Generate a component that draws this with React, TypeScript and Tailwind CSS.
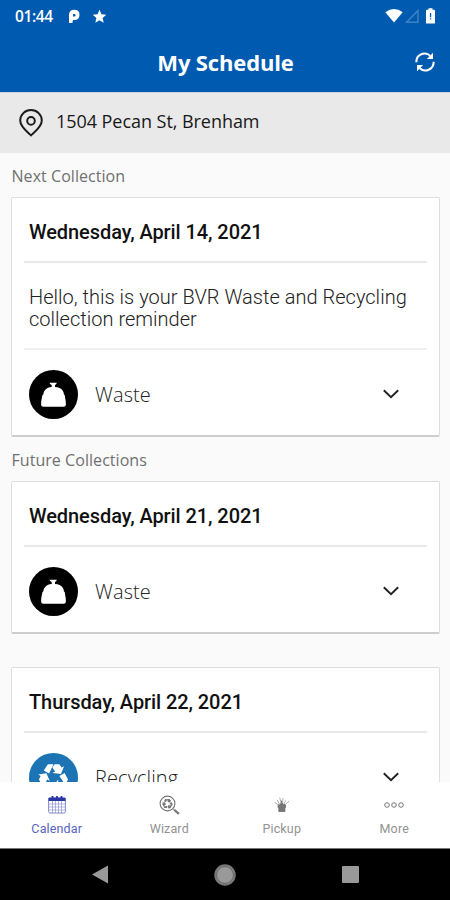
import type { ReactNode } from "react";
import clsx from "clsx";

type CollectionCardProps = {
  date: string;
  message?: string;
  children: ReactNode;
};

type CollectionRowProps = {
  icon: ReactNode;
  label: string;
};

type TabProps = {
  icon: ReactNode;
  label: string;
  active?: boolean;
};

const StatusBar = () => {
  return (
    <div className="flex h-8 items-center pl-[15px] pr-[15px] text-white">
      <span className="w-10 whitespace-nowrap font-['Open_Sans'] text-[15.5px] font-semibold leading-8 tracking-[-0.4px]">
        01:44
      </span>
      <svg className="ml-[13px] h-[15px] w-3" viewBox="0 0 12 15">
        <path
          fillRule="evenodd"
          d="M1 14V5.500Q1.300.8 6.200.8q5.300 0 5.300 5.100T6.200 11H5l-.7 3zM5 5v2.500h1.300q1.300 0 1.300-1.300T6.300 4.900z"
          fill="currentColor"
        />
      </svg>
      <svg className="ml-3 h-[15px] w-[15px]" viewBox="0 0 15 15">
        <path
          d="M7.500.8l1.900 4.500 4.900.4-3.700 3.200 1.100 4.800-4.200-2.500-4.200 2.500 1.100-4.800L.7 5.700l4.900-.4z"
          fill="currentColor"
        />
      </svg>
      <div className="ml-auto flex items-center">
        <svg className="h-4 w-[18px]" viewBox="0 0 18 16">
          <path d="M.3 4.200Q9-2.400 17.700 4.200L9 14.600z" fill="currentColor" />
        </svg>
        <svg className="ml-[2px] h-4 w-[14px]" viewBox="0 0 14 16" fill="none">
          <path d="M1.500 14.200L13 2.500v11.700z" stroke="#3f82c4" strokeWidth="1.400" />
        </svg>
        <svg className="ml-[7px] h-4 w-[9px]" viewBox="0 0 9 16">
          <path
            d="M2.500.3h4v1.500h1.600q.9 0 .9.9v12q0 .9-.9.9H.9q-.9 0-.9-.9v-12q0-.9.9-.9h1.600z"
            fill="currentColor"
          />
          <path d="M3.900 5h1.300v4.200H3.900zM3.900 10.300h1.300v1.300H3.900z" fill="#005bb0" />
        </svg>
      </div>
    </div>
  );
};

const RefreshIcon = () => {
  return (
    <svg className="h-5 w-5" viewBox="0 0 20 20" fill="none" stroke="currentColor" strokeWidth="2">
      <path d="M1.400 10.200A8.200 8.200 0 0 1 15.400 4" />
      <path d="M18.600 9.800A8.200 8.200 0 0 1 4.600 16" />
      <path d="M18 .8v6.100h-6.100zM2 19.200v-6.100h6.100z" fill="currentColor" stroke="none" />
    </svg>
  );
};

const PinIcon = () => {
  return (
    <svg className="h-7 w-6" viewBox="0 0 24 28" fill="none" stroke="#1c1c1c" strokeWidth="2">
      <path d="M12 26.300C8.600 23 1.200 17.800 1.200 11.400a10.800 10.300 0 0 1 21.600 0C22.800 17.800 15.400 23 12 26.300z" />
      <circle cx="12" cy="11.900" r="3.800" />
    </svg>
  );
};

const WasteIcon = () => {
  return (
    <svg className="h-[49px] w-[49px]" viewBox="0 0 49 49">
      <circle cx="24.500" cy="24.500" r="24.500" fill="#000" />
      <path
        d="M20.500 12.700h7.200q.2 1.300-1.700 2.200v2.200q5.300.3 7.600 3.400 1.200 1.600 1.300 3.700 1.100.6 1.200 3.200.8 3.400.8 7.200 0 2-1.800 2.200H13.900q-1.800-.2-1.800-2.200 0-4 .9-7.300.1-2.500 1.400-3.100 0-2.200 1.300-3.800 2.400-3 7-3.300v-2.200q-2.200-.7-2.200-2.200z"
        fill="#fff"
      />
    </svg>
  );
};

// one bent arrow, repeated at 0, 120 and 240 degrees
const arrowPath =
  "M-9.700-7.200L-6-13q.3-.5 1-.5h5L-4.400-4.200zM1.200-13.500h4q.8 0 1.200.7L8-10.200l2.500-1.400L7.500-3.800-1-4.900l2.600-1.500-2.700-3.900z";

const RecycleArrows = () => {
  return (
    <g>
      <path d={arrowPath} />
      <path d={arrowPath} transform="rotate(120)" />
      <path d={arrowPath} transform="rotate(240)" />
    </g>
  );
};

const RecyclingIcon = () => {
  return (
    <svg className="h-[49px] w-[49px]" viewBox="0 0 49 49">
      <circle cx="24.500" cy="24.500" r="24.500" fill="#1c74b4" />
      <g transform="translate(24.500 24.800)" fill="#fff">
        <RecycleArrows />
      </g>
    </svg>
  );
};

const Chevron = () => {
  return (
    <svg className="h-[10px] w-4" viewBox="0 0 16 10" fill="none" stroke="#222" strokeWidth="1.900">
      <path d="M.8 1.200L8 8.200l7.200-7" />
    </svg>
  );
};

const CollectionRow = ({ icon, label }: CollectionRowProps) => {
  return (
    <div className="flex h-[85px] items-center pl-[5px] pr-7 pt-[3px]">
      {icon}
      <span className="ml-[17px] pt-px font-['Open_Sans'] text-[20px] font-light tracking-[0.1px] text-[#222]">
        {label}
      </span>
      <div className="ml-auto">
        <Chevron />
      </div>
    </div>
  );
};

const CollectionCard = ({ date, message, children }: CollectionCardProps) => {
  return (
    <section className="ml-[11px] mr-[10px] shrink-0 rounded-[2px] border border-b-2 border-[#dedede] border-b-[#cdcdcd] bg-white px-3">
      <h2 className="h-[65px] border-b-2 border-[#e9e9e9] pl-[5px] font-['Roboto'] text-[20px] font-medium leading-[68px] tracking-[-0.08px] text-[#111]">
        {date}
      </h2>
      {message ? (
        <p className="h-[87px] border-b-2 border-[#efefef] pl-[5px] pt-[23px] font-['Roboto'] text-[20px] font-light leading-[22px] tracking-[0.02px] text-[#222]">
          {message}
        </p>
      ) : null}
      {children}
    </section>
  );
};

const CalendarIcon = () => {
  return (
    <svg className="h-[19px] w-[18px]" viewBox="0 0 18 19" fill="none" stroke="#7f87c9">
      <rect x=".6" y="2.500" width="16.800" height="15.500" rx="1.500" strokeWidth="1" />
      <path d="M.6 3h16.800v3H.6z" fill="#2836a6" stroke="none" />
      <path d="M4.500 1v3M9 1v3M13.500 1v3" stroke="#2836a6" strokeWidth="1.800" />
      <path d="M1 9h16M1 12h16M1 15h16M4.500 6v12M7.500 6v12M10.500 6v12M13.500 6v12" strokeWidth=".6" />
    </svg>
  );
};

const WizardIcon = () => {
  return (
    <svg className="h-5 w-[21px]" viewBox="0 0 21 20" fill="none" stroke="#777">
      <circle cx="8.500" cy="8.500" r="7.400" strokeWidth="1.100" />
      <g transform="translate(8.500 8.800) scale(.36)" fill="#777" stroke="none">
        <RecycleArrows />
      </g>
      <path d="M13.800 13.500l1.600 1.500" strokeWidth="1" />
      <path d="M15.200 14.700l4.700 4.200" strokeWidth="2.200" />
    </svg>
  );
};

const PickupIcon = () => {
  return (
    <svg className="h-[17px] w-4" viewBox="0 0 16 17" fill="#777">
      <path d="M3.500 11q-.2-1.800 1.200-3l1.200.4L7.500 4l1.500 3.700 1.700.3q1.700 1.200 1.500 3l-1 1.500.3 2q0 1.500-1.400 1.500H5.600q-1.400 0-1.400-1.500l.3-2z" />
      <path
        d="M5.400 8L3.200 3.800M6.900 6L5.700 1.700M8.600 6.500l.4-4.500M10 8l1.700-3.600M11 9l4.200-4M4.500 9L1 6.600"
        stroke="#999"
        strokeWidth=".8"
      />
    </svg>
  );
};

const MoreIcon = () => {
  return (
    <svg className="h-[6px] w-5" viewBox="0 0 20 6" fill="none" stroke="#777">
      <circle cx="3" cy="3" r="2.300" />
      <circle cx="10" cy="3" r="2.300" />
      <circle cx="17" cy="3" r="2.300" />
    </svg>
  );
};

const Tab = ({ icon, label, active }: TabProps) => {
  return (
    <button className="flex flex-1 flex-col items-center pl-px pt-3">
      <span className="flex h-[21px] items-center justify-center">{icon}</span>
      <span
        className={clsx(
          "mt-[6px] font-['Roboto'] text-[12.5px] leading-4 tracking-[0.15px]",
          active ? "text-[#5562bd]" : "text-[#929292]"
        )}
      >
        {label}
      </span>
    </button>
  );
};

const SectionLabel = ({ children }: { children: ReactNode }) => {
  return (
    <p className="h-11 shrink-0 pl-[11.5px] font-['Open_Sans'] text-[16px] leading-[46px] tracking-[0.05px] text-[#707070]">
      {children}
    </p>
  );
};

const App = () => {
  return (
    <div className="flex h-[900px] w-[450px] flex-col overflow-hidden bg-[#fafafa]">
      <header className="h-[92px] shrink-0 bg-[#005bb0]">
        <StatusBar />
        <div className="grid h-[60px] grid-cols-[1fr_auto_1fr] items-center pr-[15px] text-white">
          <h1 className="col-start-2 pl-[16px] font-['Open_Sans'] text-[22px] font-bold leading-[60px] tracking-[-0.15px]">
            My Schedule
          </h1>
          <button className="justify-self-end">
            <RefreshIcon />
          </button>
        </div>
      </header>

      <div className="flex h-[61px] shrink-0 items-center border-t border-[#cfd5dd] bg-[#e9e9e9] pl-[19px]">
        <PinIcon />
        <span className="ml-[13px] pb-[3px] font-['Open_Sans'] text-[18px] tracking-[-0.05px] text-[#181818]">
          1504 Pecan St, Brenham
        </span>
      </div>

      <main className="flex min-h-0 flex-1 flex-col overflow-hidden">
        <SectionLabel>Next Collection</SectionLabel>
        <CollectionCard
          date="Wednesday, April 14, 2021"
          message="Hello, this is your BVR Waste and Recycling collection reminder"
        >
          <CollectionRow icon={<WasteIcon />} label="Waste" />
        </CollectionCard>
        <SectionLabel>Future Collections</SectionLabel>
        <CollectionCard date="Wednesday, April 21, 2021">
          <CollectionRow icon={<WasteIcon />} label="Waste" />
        </CollectionCard>
        <div className="h-[33px] shrink-0" />
        <CollectionCard date="Thursday, April 22, 2021">
          <CollectionRow icon={<RecyclingIcon />} label="Recycling" />
        </CollectionCard>
      </main>

      <nav className="flex h-[66px] shrink-0 bg-white">
        <Tab icon={<CalendarIcon />} label="Calendar" active />
        <Tab icon={<WizardIcon />} label="Wizard" />
        <Tab icon={<PickupIcon />} label="Pickup" />
        <Tab icon={<MoreIcon />} label="More" />
      </nav>

      <div className="grid h-[52px] shrink-0 grid-cols-3 items-center border-t border-[#777] bg-black px-[37px]">
        <svg className="h-[19px] w-4 justify-self-center" viewBox="0 0 16 19">
          <path d="M16 .5v18L0 9.500z" fill="#999" />
        </svg>
        <svg className="size-[22px] justify-self-center" viewBox="0 0 22 22">
          <circle cx="11" cy="11" r="10" fill="#999" stroke="#777" strokeWidth="1.500" />
          <circle cx="11" cy="11" r="8.500" fill="none" stroke="#555" strokeWidth=".8" />
        </svg>
        <div className="size-[17px] justify-self-center rounded-[1px] bg-[#999]" />
      </div>
    </div>
  );
};

export default App;
